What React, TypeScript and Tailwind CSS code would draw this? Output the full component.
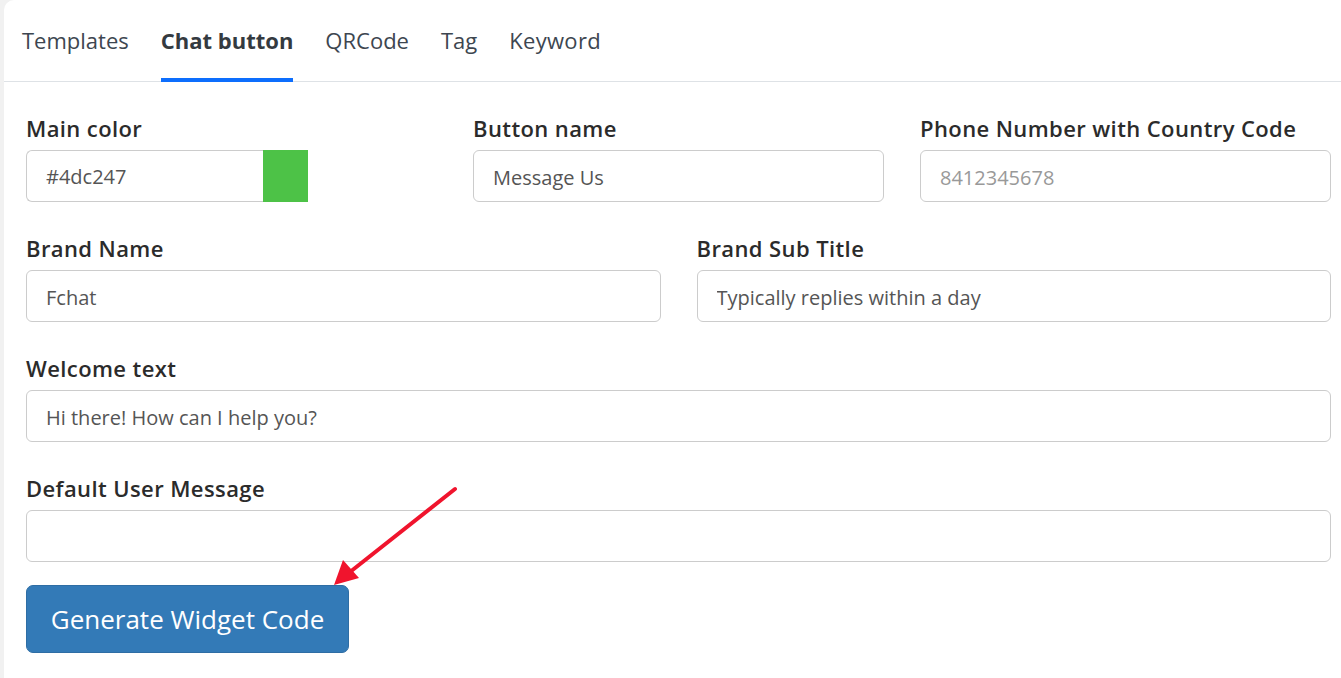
export default function App() {
  const font = { fontFamily: '"Open Sans", "Noto Sans", sans-serif' };
  return (
    <div className="h-[678px] w-[1341px] overflow-hidden bg-[#f1f1f1] relative" style={font}>
      <div className="ml-[4px] w-[1400px] h-[700px] bg-white rounded-tl-[10px]">
        <nav className="flex h-[82px] gap-[32px] pl-[18px] border-b border-[#dee2e6] text-[22px] text-[#3d4650]">
          <a className="flex items-center h-[82px] pb-[2px]">Templates</a>
          <a className="flex items-center h-[82px] pt-[2px] border-b-[4px] border-[#0d6efd] font-bold text-[#343a40]">
            Chat button
          </a>
          <a className="flex items-center h-[82px] pb-[2px]">QRCode</a>
          <a className="flex items-center h-[82px] pb-[2px]">Tag</a>
          <a className="flex items-center h-[82px] pb-[2px] tracking-[0.3px]">Keyword</a>
        </nav>

        <div className="w-[1305px] ml-[22px] pt-[32px] text-[#333]">
          <div className="grid grid-cols-3 gap-x-[36px]">
            <Field label="Main color">
              <div className="flex">
                <input
                  readOnly
                  value="#4dc247"
                  className="h-[52px] w-[237px] border border-[#ccc] border-r-0 rounded-l-[6px] px-[19px] text-[20px] text-[#555] outline-none"
                />
                <div className="h-[52px] w-[45px] bg-[#4dc247]" />
              </div>
            </Field>
            <Field label="Button name">
              <Input value="Message Us" />
            </Field>
            <Field label="Phone Number with Country Code">
              <Input placeholder="8412345678" />
            </Field>
          </div>

          <div className="grid grid-cols-2 gap-x-[36px] mt-[32px]">
            <Field label="Brand Name">
              <Input value="Fchat" />
            </Field>
            <Field label="Brand Sub Title">
              <Input value="Typically replies within a day" />
            </Field>
          </div>

          <div className="mt-[32px]">
            <Field label="Welcome text">
              <Input value="Hi there! How can I help you?" />
            </Field>
          </div>

          <div className="mt-[32px]">
            <Field label="Default User Message">
              <Input value="" />
            </Field>
          </div>

          <button className="mt-[23px] h-[68px] w-[323px] rounded-[7px] bg-[#337ab7] border border-[#2e6da4] text-white text-[26px]">
            Generate Widget Code
          </button>
        </div>
      </div>

      {/* annotation arrow */}
      <svg className="absolute left-0 top-0 pointer-events-none" width="1341" height="678">
        <line x1="455" y1="489" x2="350" y2="572" stroke="#f0142d" strokeWidth="4" strokeLinecap="round" />
        <polygon points="334,585 343,560 359,578" fill="#f0142d" />
      </svg>
    </div>
  );
}

function Field({ label, children }: { label: string; children: React.ReactNode }) {
  return (
    <div>
      <label className="block text-[22px] leading-[28px] tracking-[0.4px] font-semibold mb-[8px] text-[#2b2b2b]">
        {label}
      </label>
      {children}
    </div>
  );
}

function Input({ value, placeholder }: { value?: string; placeholder?: string }) {
  return (
    <input
      readOnly
      value={value}
      placeholder={placeholder}
      className="block h-[52px] w-full border border-[#ccc] rounded-[6px] px-[19px] pt-[2px] text-[20px] text-[#555] placeholder:text-[#999] outline-none"
    />
  );
}
